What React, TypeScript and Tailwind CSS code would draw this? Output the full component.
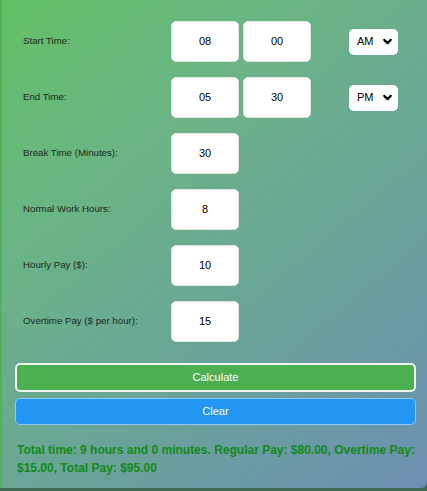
import { ChevronDown } from 'lucide-react'

const rows = [
  { label: 'Start Time:', values: ['08', '00'], period: 'AM' },
  { label: 'End Time:', values: ['05', '30'], period: 'PM' },
  { label: 'Break Time (Minutes):', values: ['30'] },
  { label: 'Normal Work Hours:', values: ['8'] },
  { label: 'Hourly Pay ($):', values: ['10'] },
  { label: 'Overtime Pay ($ per hour):', values: ['15'] },
]

function Field({ value }: { value: string }) {
  return (
    <div className="w-[68px] h-[41px] bg-white rounded-[5px] border border-[#dfe6e0] flex items-center justify-center text-[11px] text-black">
      {value}
    </div>
  )
}

export default function App() {
  return (
    <div className="w-[427px] h-[491px] bg-[#3f6b55] font-['Liberation_Sans',Arial,sans-serif]">
      <div className="h-[488px] rounded-br-[6px] border-l-[2px] border-[#52b356] bg-[linear-gradient(140deg,#62c064_0%,#6ab585_30%,#6aa596_60%,#6c8fb2_100%)] pt-[21px] pl-[13px] pr-[11px]">
        <div className="flex flex-col gap-[15px]">
          {rows.map((row) => (
            <div key={row.label} className="flex items-center">
              <div className="w-[156px] pl-[8px] text-[9.7px] text-[#1b2a1b]">{row.label}</div>
              <div className="flex gap-[4px]">
                {row.values.map((v, i) => (
                  <Field key={i} value={v} />
                ))}
              </div>
              {row.period && (
                <div className="ml-[38px] w-[49px] h-[26px] bg-white rounded-[5px] flex items-center pl-[8px] gap-[7px] text-[11px] text-black">
                  <span>{row.period}</span>
                  <ChevronDown className="w-[13px] h-[13px]" strokeWidth={4} />
                </div>
              )}
            </div>
          ))}
        </div>

        <div className="mt-[21px] flex flex-col gap-[6px]">
          <button className="h-[29px] w-full rounded-[5px] border-2 border-[#eef5ee] bg-[#4caf50] text-white text-[11px]">
            Calculate
          </button>
          <button className="h-[27px] w-full rounded-[5px] border border-[#8fcaf5] bg-[#2196f3] text-white text-[11px]">
            Clear
          </button>
        </div>

        <p className="mt-[16px] pl-[2px] text-[12px] leading-[18px] font-bold text-[#118a17]">
          Total time: 9 hours and 0 minutes. Regular Pay: $80.00, Overtime Pay: $15.00, Total Pay: $95.00
        </p>
      </div>
    </div>
  )
}
